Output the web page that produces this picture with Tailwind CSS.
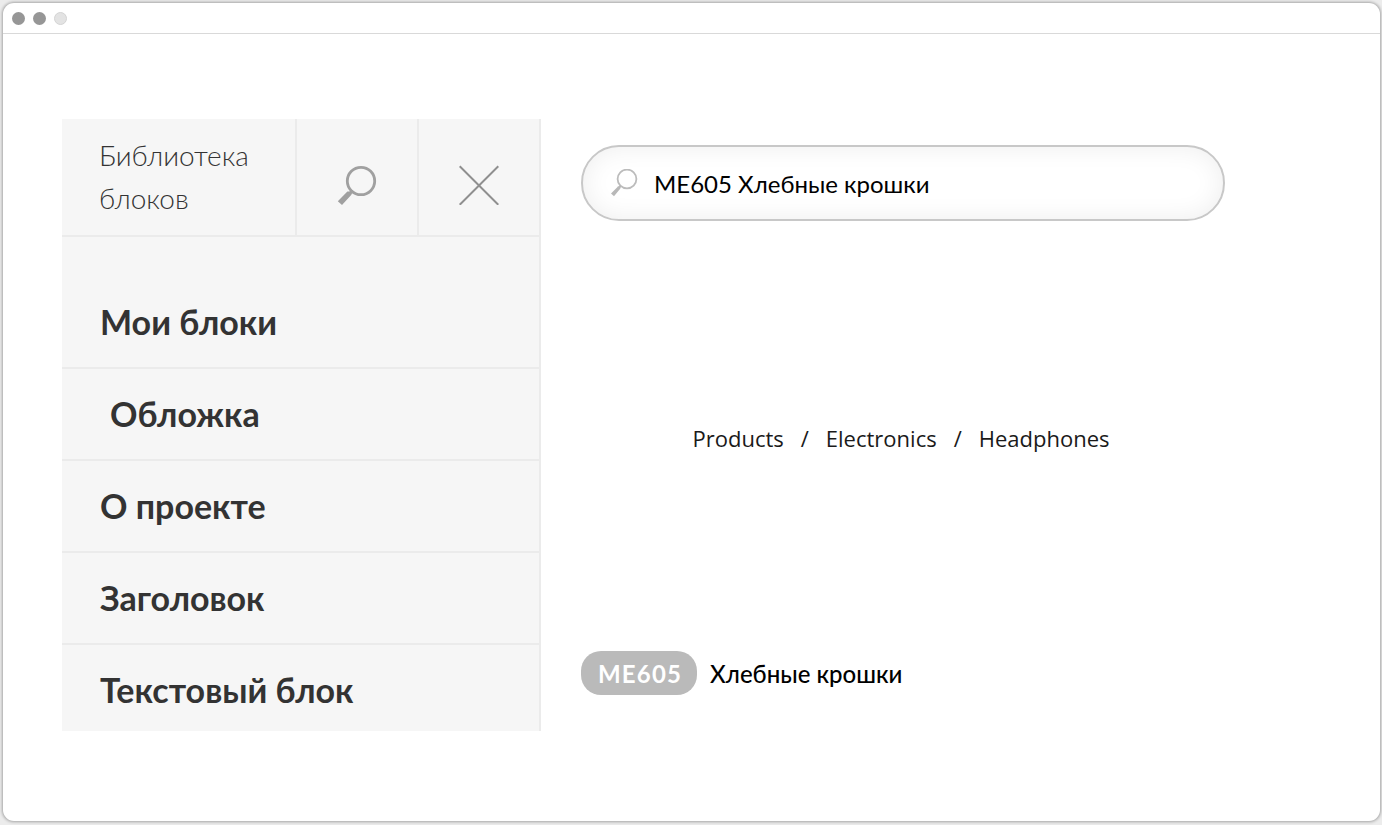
<!DOCTYPE html>
<html lang="ru">
<head>
<meta charset="utf-8">
<meta name="viewport" content="width=device-width, initial-scale=1">
<title>Библиотека блоков</title>
<script src="https://cdn.jsdelivr.net/npm/@tailwindcss/browser@4"></script>
</head>
<body class="flex min-h-screen flex-col bg-[#ececec] pt-[3px] pr-[2px] pb-1 pl-[3px] font-['Lato','Open_Sans',sans-serif]">
<div class="flex flex-1 flex-col rounded-[11px] bg-white shadow-[0_0_3px_1px_rgba(0,0,0,0.3)]">
  <header class="flex h-[31px] items-center gap-2 border-b border-[#d9d9d9] px-[9px]">
    <span class="size-[13px] rounded-full bg-[#969696]"></span>
    <span class="size-[13px] rounded-full bg-[#969696]"></span>
    <span class="size-[13px] rounded-full border border-[#d4d4d4] bg-[#e3e3e3]"></span>
  </header>
  <main class="flex flex-1 gap-10 pt-[85px] pr-[155px] pb-[90px] pl-[59px]">
    <aside class="w-[479px] shrink-0 self-start border-r-2 border-[#ebebeb] bg-[#f6f6f6]">
      <div class="flex h-[118px] border-b-2 border-[#ebebeb]">
        <h1 class="flex-1 border-r-2 border-[#ebebeb] pt-[15px] pl-[37px] text-[28px] leading-[43px] font-light text-[#333]">Библиотека<br>блоков</h1>
        <button type="button" aria-label="Поиск" class="flex w-[122px] items-center justify-center border-r-2 border-[#ebebeb] pt-4">
          <svg class="size-10" viewBox="0 0 40 40" fill="none"><circle cx="24" cy="16" r="13.7" stroke="#a0a0a0" stroke-width="2.8"/><path d="M14.5 24.4 L16.2 26 L14.2 30 L5 40 L.8 36.2 L10.4 26.6 L12.4 26.4 Z" fill="#a0a0a0"/></svg>
        </button>
        <button type="button" aria-label="Закрыть" class="flex w-[120px] items-center justify-center pt-4">
          <svg class="size-10" viewBox="0 0 40 40" fill="none" stroke="#8f8f8f" stroke-width="2"><path d="M.7 1.2 39.3 39.8M39.3 1.2 .7 39.8"/></svg>
        </button>
      </div>
      <nav class="text-[34px] leading-[42px] font-bold text-[#333]">
        <a href="#" class="block h-[132px] border-b-2 border-[#ebebeb] pt-16 pl-[38px]">Мои блоки</a>
        <a href="#" class="block h-[92px] border-b-2 border-[#ebebeb] pt-6 pl-12">Обложка</a>
        <a href="#" class="block h-[92px] border-b-2 border-[#ebebeb] pt-6 pl-[38px]">О проекте</a>
        <a href="#" class="block h-[92px] border-b-2 border-[#ebebeb] pt-6 pl-[38px]">Заголовок</a>
        <a href="#" class="block h-[86px] pt-6 pl-[38px]">Текстовый блок</a>
      </nav>
    </aside>
    <section class="flex min-w-0 flex-1 flex-col pt-[26px]">
      <label class="flex h-[76px] items-center gap-4 rounded-full border-2 border-[#c8c8c8] px-[27px] shadow-[inset_0_0_26px_rgba(0,0,0,0.07)]">
        <svg class="size-7 shrink-0" viewBox="0 0 28 28" fill="none" aria-hidden="true"><circle cx="17" cy="10" r="9.4" stroke="#bcbcbc" stroke-width="1.8"/><path d="M10.3 16.2 L11.3 17.2 L10.2 19.8 L4 27.2 L1 24.4 L8 17.6 Z" fill="#b8b8b8"/></svg>
        <input type="text" aria-label="Поиск блоков" value="ME605 Хлебные крошки" class="min-w-0 flex-1 bg-transparent pt-0.5 text-[24px] text-black outline-none">
      </label>
      <nav aria-label="Навигация" class="mt-[201px] flex h-8 items-center justify-center gap-[17px] pr-1 font-['Open_Sans',sans-serif] text-[22px] text-[#1a1a1a]">
        <a href="#">Products</a><span>/</span><a href="#">Electronics</a><span>/</span><a href="#">Headphones</a>
      </nav>
      <div class="mt-[197px] flex h-11 items-center gap-[13px]">
        <span class="flex h-11 w-[116px] items-center justify-center rounded-[20px] bg-[#bababa] pt-0.5 pl-0.5 text-[24px] font-bold tracking-wider text-white">ME605</span>
        <span class="pt-0.5 text-[24px] font-medium text-black">Хлебные крошки</span>
      </div>
    </section>
  </main>
</div>
</body>
</html>
